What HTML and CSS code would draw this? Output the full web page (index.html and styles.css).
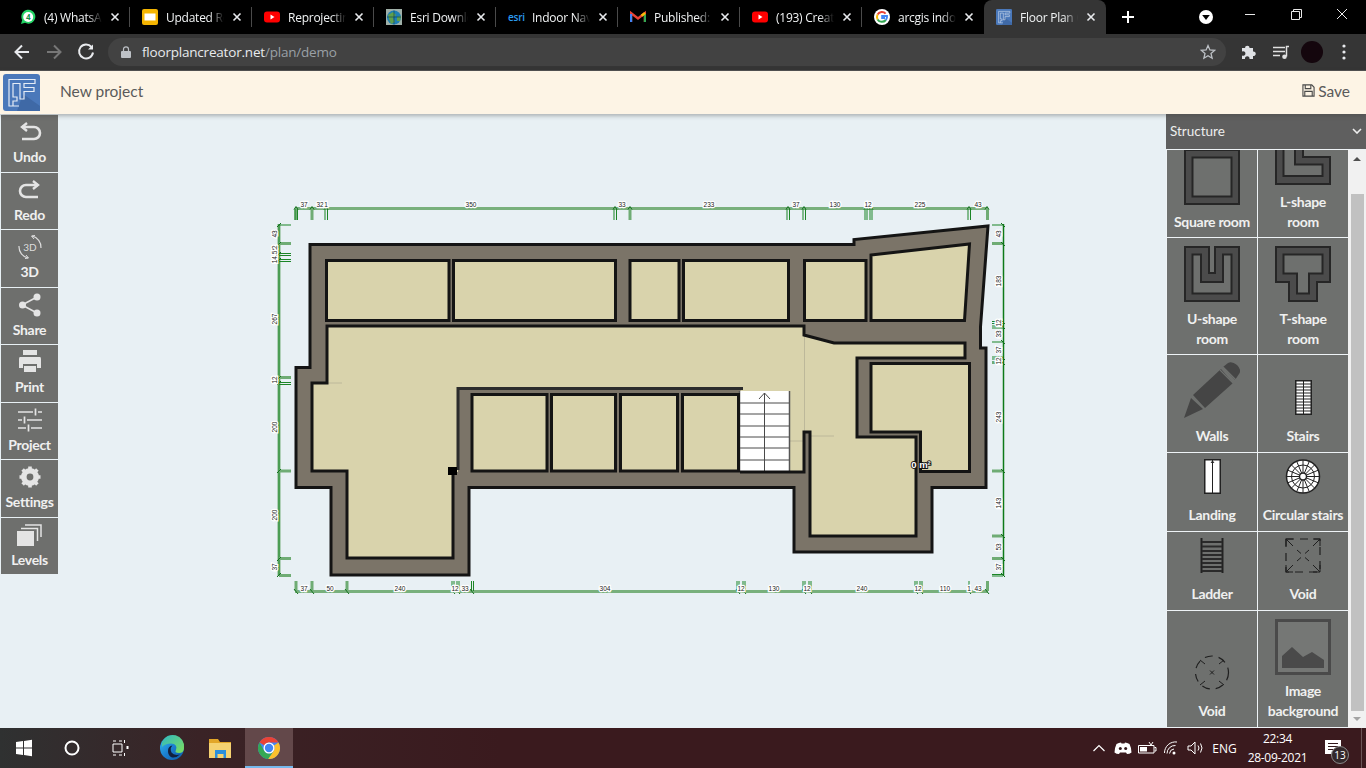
FILE: index.html
```html
<!DOCTYPE html>
<html lang="en">
<head>
<meta charset="utf-8">
<title>Floor Plan Creator</title>
<link rel="stylesheet" href="styles.css">
</head>
<body>
<svg class="defs" width="0" height="0" aria-hidden="true">
  <symbol id="fp-logo" viewBox="0 0 37 37">
    <rect width="37" height="37" rx="3" fill="#4a78ba"/>
    <path d="M20 20 L37 32 V37 H14 Z" fill="#3f69a6"/>
    <path d="M6 27 V5.500 H32 V9.500 H21 V13.500 H31 V17.500 H21 V25 H17 V9.500 H10 V23 H14 V27 H10 V32 H16 M6 27 V32 H10" fill="none" stroke="#e4ecf6" stroke-width="1.200"/>
  </symbol>
  <symbol id="yt" viewBox="0 0 16 16">
    <rect y="2.500" width="16" height="11" rx="3" fill="#f00"/>
    <path d="M6.500 5.500 L10.500 8 L6.500 10.500Z" fill="#fff"/>
  </symbol>
  <symbol id="x" viewBox="0 0 10 10">
    <path d="M1.500 1.500 L8.500 8.500 M8.500 1.500 L1.500 8.500" stroke="#e8eaed" stroke-width="1.600"/>
  </symbol>
</svg>

<header class="tabbar">
  <div class="tabs">
    <div class="tab">
      <svg class="fav" viewBox="0 0 16 16"><path d="M1 15 L2.200 11 A7 7 0 1 1 5 13.800Z" fill="#25d366"/><circle cx="8.200" cy="8" r="5" fill="#fff"/><text x="8.200" y="11" class="fav-four">4</text></svg>
      <span class="tab-title">(4) WhatsApp</span>
      <svg class="tab-x"><use href="#x"/></svg>
    </div>
    <div class="tab">
      <svg class="fav" viewBox="0 0 16 16"><rect width="16" height="16" rx="2" fill="#f4b400"/><rect x="2.500" y="4.500" width="11" height="7" fill="#fff"/></svg>
      <span class="tab-title">Updated Req</span>
      <svg class="tab-x"><use href="#x"/></svg>
    </div>
    <div class="tab">
      <svg class="fav"><use href="#yt"/></svg>
      <span class="tab-title">Reprojecting</span>
      <svg class="tab-x"><use href="#x"/></svg>
    </div>
    <div class="tab">
      <svg class="fav" viewBox="0 0 16 16"><rect width="16" height="16" fill="#9fb0a8"/><circle cx="8" cy="8.500" r="7" fill="#1f7fb5"/><path d="M2 6 L7 3 L10 6 L7 9 L9 13 L5 15 L3 10Z M11 8 L15 7 L14 12 L11 12Z" fill="#5fa04e"/><path d="M1 8 H15 M8 1.500 V15.500" stroke="#0c3a56" stroke-width=".6"/></svg>
      <span class="tab-title">Esri Downlo</span>
      <svg class="tab-x"><use href="#x"/></svg>
    </div>
    <div class="tab">
      <span class="fav fav-esri">esri</span>
      <span class="tab-title">Indoor Navig</span>
      <svg class="tab-x"><use href="#x"/></svg>
    </div>
    <div class="tab">
      <svg class="fav" viewBox="0 0 16 16"><path d="M1 13 V4 L8 9.500 L15 4 V13" fill="none" stroke="#ea4335" stroke-width="2.400"/><path d="M1 13 V5" stroke="#4285f4" stroke-width="2.400"/><path d="M15 13 V5" stroke="#34a853" stroke-width="2.400"/><path d="M11.500 6.800 L15 4" stroke="#fbbc05" stroke-width="2.400"/></svg>
      <span class="tab-title">Published:</span>
      <svg class="tab-x"><use href="#x"/></svg>
    </div>
    <div class="tab">
      <svg class="fav"><use href="#yt"/></svg>
      <span class="tab-title">(193) Creat</span>
      <svg class="tab-x"><use href="#x"/></svg>
    </div>
    <div class="tab tab-last">
      <svg class="fav" viewBox="0 0 16 16"><circle cx="8" cy="8" r="8" fill="#fff"/><path d="M11.600 4.600 A5 5 0 0 0 3.600 5.600" fill="none" stroke="#ea4335" stroke-width="2"/><path d="M3.600 5.600 A5 5 0 0 0 3.600 10.400" fill="none" stroke="#fbbc05" stroke-width="2"/><path d="M3.600 10.400 A5 5 0 0 0 11.800 11" fill="none" stroke="#34a853" stroke-width="2"/><path d="M11.800 11 A5 5 0 0 0 13 7 H8.200 V9 H11" fill="none" stroke="#4285f4" stroke-width="2"/></svg>
      <span class="tab-title">arcgis indoo</span>
      <svg class="tab-x"><use href="#x"/></svg>
    </div>
    <div class="tab tab-active">
      <svg class="fav"><use href="#fp-logo"/></svg>
      <span class="tab-title">Floor Plan C</span>
      <svg class="tab-x"><use href="#x"/></svg>
    </div>
  </div>
  <svg class="new-tab" viewBox="0 0 24 24"><path d="M12 6 V18 M6 12 H18" stroke="#fff" stroke-width="2"/></svg>
  <svg class="profile-drop" viewBox="0 0 16 16"><circle cx="8" cy="8" r="7" fill="#fff"/><path d="M4.200 6 H11.800 L8 11Z" fill="#000"/></svg>
  <div class="win-controls">
    <svg class="win-btn" viewBox="0 0 46 28"><path d="M18 14.500 H28" stroke="#e8e8e8"/></svg>
    <svg class="win-btn" viewBox="0 0 46 28"><path d="M18.500 11.500 H26.500 V19.500 H18.500Z M20.500 11 V9.500 H28.500 V17.500 H27" fill="none" stroke="#e8e8e8"/></svg>
    <svg class="win-btn" viewBox="0 0 46 28"><path d="M18 9 L28 19 M28 9 L18 19" stroke="#e8e8e8"/></svg>
  </div>
</header>

<nav class="toolbar">
  <svg class="nav-btn" viewBox="0 0 32 36"><path d="M23 18 H10 M16 11.500 L9.500 18 L16 24.500" fill="none" stroke="#e8eaed" stroke-width="2"/></svg>
  <svg class="nav-btn" viewBox="0 0 32 36"><path d="M9 18 H22 M16 11.500 L22.500 18 L16 24.500" fill="none" stroke="#777" stroke-width="2"/></svg>
  <svg class="nav-btn" viewBox="0 0 32 36"><path d="M21.500 13 A7 7 0 1 0 23 18.500" fill="none" stroke="#e8eaed" stroke-width="2"/><path d="M23 10.500 V15.500 H18Z" fill="#e8eaed"/></svg>
  <div class="omnibox">
    <svg class="lock" viewBox="0 0 10 12"><path d="M2.500 5 V3.300 A2.500 2.500 0 0 1 7.500 3.300 V5" fill="none" stroke="#bdc1c6" stroke-width="1.200"/><rect y="5" width="10" height="7" rx="1" fill="#bdc1c6"/></svg>
    <span class="url"><span class="url-host">floorplancreator.net</span>/plan/demo</span>
    <svg class="star" viewBox="0 0 16 16"><path d="M8 1.600 L9.900 6 L14.600 6.400 L11 9.500 L12.100 14.200 L8 11.700 L3.900 14.200 L5 9.500 L1.400 6.400 L6.100 6Z" fill="none" stroke="#bdc1c6" stroke-width="1.300"/></svg>
  </div>
  <svg class="tool-btn" viewBox="0 0 32 36"><path d="M10 14 H13 A2.300 2.300 0 1 1 17.600 14 H21 V17.500 A2.300 2.300 0 1 1 21 22 V25 H17.500 A2.300 2.300 0 1 0 13 25 H10 V21.500 A2.300 2.300 0 1 0 10 17.500Z" fill="#dfe1e5"/></svg>
  <svg class="tool-btn" viewBox="0 0 32 36"><path d="M9 13.500 H21 M9 17.500 H21 M9 21.500 H16" stroke="#e0e0e0" stroke-width="1.500"/><path d="M22.500 22.500 V12.500 H25" fill="none" stroke="#e0e0e0" stroke-width="1.500"/><circle cx="20.500" cy="22.800" r="2.300" fill="#e0e0e0"/></svg>
  <div class="avatar-box"><div class="avatar"></div></div>
  <svg class="tool-btn" viewBox="0 0 32 36"><circle cx="16" cy="12" r="1.600" fill="#e8eaed"/><circle cx="16" cy="18" r="1.600" fill="#e8eaed"/><circle cx="16" cy="24" r="1.600" fill="#e8eaed"/></svg>
</nav>

<div class="appbar">
  <svg class="app-logo"><use href="#fp-logo"/></svg>
  <span class="project-name">New project</span>
  <span class="save">
    <svg class="save-icon" viewBox="0 0 14 14"><path d="M1 1 H10.500 L13 3.500 V13 H1Z M3.500 1 V5 H9.500 V1 M3 13 V8 H11 V13" fill="none" stroke="#4a4a4a" stroke-width="1.200"/></svg>
    Save
  </span>
</div>

<main class="workspace">
  <aside class="tools">
    <div class="tool">
      <svg class="tool-ico" viewBox="0 0 30 30"><path d="M12 6 L7 10 L12 14" fill="none" stroke="#e4e4e4" stroke-width="2.400"/><path d="M7 10 H19 A6 6 0 0 1 19 22 H7" fill="none" stroke="#e4e4e4" stroke-width="2.600"/></svg>
      <span class="tool-label">Undo</span>
    </div>
    <div class="tool">
      <svg class="tool-ico" viewBox="0 0 30 30"><path d="M18 6 L23 10 L18 14" fill="none" stroke="#e4e4e4" stroke-width="2.400"/><path d="M23 10 H11 A6 6 0 0 0 11 22 H23" fill="none" stroke="#e4e4e4" stroke-width="2.600"/></svg>
      <span class="tool-label">Redo</span>
    </div>
    <div class="tool">
      <svg class="tool-ico" viewBox="0 0 30 30"><text x="15" y="19" class="ico-3d">3D</text><path d="M17 4 A11.500 11.500 0 0 1 26 16" fill="none" stroke="#ddd" stroke-width="1.200"/><path d="M20 3.500 L16.500 4 L19 7" fill="none" stroke="#ddd"/><path d="M13 26 A11.500 11.500 0 0 1 4 14" fill="none" stroke="#ddd" stroke-width="1.200"/><path d="M10 26.500 L13.500 26 L11 23" fill="none" stroke="#ddd"/></svg>
      <span class="tool-label">3D</span>
    </div>
    <div class="tool">
      <svg class="tool-ico" viewBox="0 0 30 30"><path d="M22 7 L7 15 L22 23" fill="none" stroke="#e4e4e4" stroke-width="1.600"/><circle cx="22" cy="7" r="3.500" fill="#e4e4e4"/><circle cx="7.500" cy="15" r="3.500" fill="#e4e4e4"/><circle cx="22" cy="23" r="3.500" fill="#e4e4e4"/></svg>
      <span class="tool-label">Share</span>
    </div>
    <div class="tool">
      <svg class="tool-ico" viewBox="0 0 30 30"><rect x="8" y="3" width="14" height="5" fill="#e4e4e4"/><path d="M5 10 H25 Q26 10 26 12 V21 H22 V17 H8 V21 H4 V12 Q4 10 5 10Z" fill="#e4e4e4"/><rect x="9" y="19" width="12" height="6" fill="#e4e4e4"/></svg>
      <span class="tool-label">Print</span>
    </div>
    <div class="tool">
      <svg class="tool-ico" viewBox="0 0 30 30"><path d="M3 7 H18 M23 7 H27 M3 15 H7 M12 15 H27 M3 23 H11 M16 23 H27 M20.500 3.500 V10.500 M9.500 11.500 V18.500 M13.500 19.500 V26.500" fill="none" stroke="#e4e4e4" stroke-width="1.700"/></svg>
      <span class="tool-label">Project</span>
    </div>
    <div class="tool">
      <svg class="tool-ico" viewBox="0 0 30 30"><circle cx="15" cy="15" r="6.500" fill="none" stroke="#e4e4e4" stroke-width="5"/><path d="M15 4.500 V25.500 M4.500 15 H25.500 M7.600 7.600 L22.400 22.400 M22.400 7.600 L7.600 22.400" stroke="#e4e4e4" stroke-width="3.600"/><circle cx="15" cy="15" r="3.400" fill="#6e6f6d"/></svg>
      <span class="tool-label">Settings</span>
    </div>
    <div class="tool">
      <svg class="tool-ico" viewBox="0 0 30 30"><rect x="2" y="11" width="17" height="15" fill="#e4e4e4"/><path d="M6 8.500 H22.500 V21" fill="none" stroke="#e4e4e4" stroke-width="1.500"/><path d="M10 5 H26 V17" fill="none" stroke="#e4e4e4" stroke-width="1.500"/></svg>
      <span class="tool-label">Levels</span>
    </div>
  </aside>

  <section class="canvas">
    <svg class="plan" width="750" height="410" viewBox="265 195 750 410">
      <!-- walls -->
      <path class="wall" d="M310 244.500 H854 V239.500 L988 226 L980.500 327 V348 H986 V487.500 H932 V552 H794 V487.500 H469 V575 H331 V487.500 H296 V367.500 H310 Z"/>
      <!-- hall -->
      <path class="floor-fill" d="M327 326 H804 V335 L834 343 H965 V358 H857 V437 H916 V536 H810 V432 H804 V472 H740 V391 H740 L743 388 H458 V472 H453 V558 H347 V471 H312 V383 H327 Z"/>
      <path class="faint" d="M804.500 335 V432 M790 441 H804 M810 436 H834 M314 383 H342"/>
      <rect class="stairs" x="740" y="391" width="49" height="81"/>
      <path class="stair-lines" d="M740 403 H789 M740 414 H789 M740 426 H789 M740 437 H789 M740 448 H789 M740 460 H789 M764.500 393 V472 M759 399 L764.500 393 L770 399"/>
      <path class="stair-edge" d="M739.500 391 V472 M789.500 391 V472"/>
      <path class="line" d="M453 472 V558 H347 V471 H312 V383 H327 V326 H804 V335 L834 343 H965 V358 H857 V437 H916 V536 H810 V432 H804 V472 H740"/>
      <path class="line line-soft" d="M743 388.500 H458 V470"/>
      <rect class="post" x="448" y="467" width="9" height="8"/>
      <!-- rooms -->
      <rect class="room" x="326.500" y="260.500" width="122.500" height="60"/>
      <rect class="room" x="453.500" y="260.500" width="162" height="60"/>
      <rect class="room" x="630" y="260.500" width="49" height="60"/>
      <rect class="room" x="683.500" y="260.500" width="105" height="60"/>
      <rect class="room" x="804.500" y="260.500" width="61.500" height="60"/>
      <path class="room" d="M871 255 L969.500 244 L964.500 320.500 H871 Z"/>
      <rect class="room" x="472" y="394.500" width="75" height="76.500"/>
      <rect class="room" x="551.500" y="394.500" width="64" height="76.500"/>
      <rect class="room" x="620.500" y="394.500" width="57" height="76.500"/>
      <rect class="room" x="682.500" y="394.500" width="56" height="76.500"/>
      <path class="room" d="M871 363.500 H969.500 V471.500 H920.500 V432 H871 Z"/>
      <text class="area" x="921" y="468">0 m²</text>

      <!-- dimensions: top -->
      <path class="dim" d="M295 208.500 H988"/>
      <path class="dim-tick" d="M312 209 V220 M987.500 209 V220 M630 209 V220 M296 209 V220"/>
      <path class="dim-tick-thin" d="M295 209 V220 M297.500 209 V220 M325 209 V220 M327.500 209 V220 M614 209 V220 M616.500 209 V220 M787 209 V220 M789.500 209 V220 M803 209 V220 M805.500 209 V220 M865 209 V220 M867 209 V220 M870 209 V220 M872 209 V220 M968 209 V220 M970.500 209 V220"/>
      <path class="dim-hook" d="M294 209.500 L296 206.500 L298 209.500 M310 209.500 L312 206.500 L314 209.500 M324 209.500 L326 206.500 L328 209.500 M613 209.500 L615 206.500 L617 209.500 M628 209.500 L630 206.500 L632 209.500 M786 209.500 L788 206.500 L790 209.500 M802 209.500 L804 206.500 L806 209.500 M864 209.500 L866 206.500 L868 209.500 M869 209.500 L871 206.500 L873 209.500 M967 209.500 L969 206.500 L971 209.500 M985 209.500 L987 206.500 L989 209.500"/>
      <!-- dimensions: left -->
      <path class="dim" d="M279 224 V576"/>
      <path class="dim-core" d="M279 224 V576"/>
      <path class="dim-tick" d="M279 243.500 H291 M279 377.500 H291 M279 471 H291 M279 558.500 H291 M279 575.500 H291"/>
      <path class="dim-tick-thin" d="M279 225 H291 M279 253.500 H291 M279 255.500 H291 M279 259.500 H291 M279 261.500 H291 M279 382.500 H291 M279 384.500 H291"/>
      <path class="dim-hook" d="M277 227 L281 223 M277 246 L281 242 M277 256 L281 252 M277 262 L281 258 M277 380 L281 376 M277 385 L281 381 M277 473 L281 469 M277 561 L281 557 M277 577 L281 573"/>
      <!-- dimensions: right -->
      <path class="dim-core-strong" d="M1003.500 224 V576"/>
      <path class="dim-tick" d="M992 243.500 H1003 M992 471 H1003 M992 536 H1003 M992 558.500 H1003 M992 362.500 H1003"/>
      <path class="dim-tick-thin" d="M992 225 H1003 M992 321.500 H1003 M992 323.500 H1003 M992 326 H1003 M992 328 H1003 M992 342 H1003 M992 357 H1003 M992 359 H1003 M992 574.500 H1003 M992 576 H1003"/>
      <path class="dim-hook" d="M1001 223 L1005 227 M1001 242 L1005 246 M1001 320 L1005 324 M1001 325 L1005 329 M1001 340 L1005 344 M1001 356 L1005 360 M1001 361 L1005 365 M1001 469 L1005 473 M1001 534 L1005 538 M1001 557 L1005 561 M1001 573 L1005 577"/>
      <!-- dimensions: bottom -->
      <path class="dim" d="M295 591.500 H988"/>
      <path class="dim-tick" d="M312 581 V591 M347 581 V591 M987.500 581 V591 M296 581 V591"/>
      <path class="dim-tick-thin" d="M452 581 V591 M454 581 V591 M457 581 V591 M459 581 V591 M471.500 581 V591 M473.500 581 V591 M737 581 V591 M739 581 V591 M743 581 V591 M745 581 V591 M803 581 V591 M805 581 V591 M809 581 V591 M811 581 V591 M915 581 V591 M917 581 V591 M920 581 V591 M922 581 V591 M969 581 V591"/>
      <path class="dim-hook" d="M294 589 L298 594 M310 589 L314 594 M345 589 L349 594 M451 589 L455 594 M456 589 L460 594 M470 589 L474 594 M736 589 L740 594 M742 589 L746 594 M802 589 L806 594 M808 589 L812 594 M914 589 L918 594 M919 589 L923 594 M967 589 L971 594 M985 589 L989 594"/>

      <!-- dimension labels -->
      <g class="dim-labels">
        <text x="304" y="207">37</text><text x="320" y="207">32</text><text x="326" y="207">1</text><text x="471" y="207">350</text><text x="622" y="207">33</text><text x="709" y="207">233</text><text x="796" y="207">37</text><text x="835" y="207">130</text><text x="868" y="207">12</text><text x="920" y="207">225</text><text x="978" y="207">43</text>
        <text x="304" y="591">37</text><text x="330" y="591">50</text><text x="400" y="591">240</text><text x="455" y="591">12</text><text x="465" y="591">33</text><text x="605" y="591">304</text><text x="741" y="591">12</text><text x="774" y="591">130</text><text x="807" y="591">12</text><text x="862" y="591">240</text><text x="918" y="591">12</text><text x="945" y="591">110</text><text x="969" y="591">1</text><text x="978" y="591">43</text>
        <text transform="translate(277 234) rotate(-90)">43</text><text transform="translate(277 249) rotate(-90)">22</text><text transform="translate(277 257) rotate(-90)">14.5</text><text transform="translate(277 319) rotate(-90)">267</text><text transform="translate(277 380) rotate(-90)">12</text><text transform="translate(277 427) rotate(-90)">200</text><text transform="translate(277 515) rotate(-90)">200</text><text transform="translate(277 567) rotate(-90)">37</text>
        <text transform="translate(1001 234) rotate(-90)">43</text><text transform="translate(1001 281) rotate(-90)">183</text><text transform="translate(1001 323) rotate(-90)">12</text><text transform="translate(1001 334) rotate(-90)">33</text><text transform="translate(1001 350) rotate(-90)">37</text><text transform="translate(1001 361) rotate(-90)">12</text><text transform="translate(1001 417) rotate(-90)">243</text><text transform="translate(1001 503) rotate(-90)">143</text><text transform="translate(1001 547) rotate(-90)">53</text><text transform="translate(1001 567) rotate(-90)">37</text>
      </g>
    </svg>
  </section>

  <aside class="library">
    <div class="lib-head"><span>Structure</span><svg class="lib-chev" viewBox="0 0 10 6"><path d="M1 1 L5 5 L9 1" fill="none" stroke="#eee" stroke-width="1.600"/></svg></div>
    <div class="lib-body">
      <div class="lib-view">
        <div class="lib-grid">
          <div class="cell cell-tall">
            <svg class="ico-lg" viewBox="0 0 56 56"><rect class="r-outer" x="1" y="1" width="54" height="54"/><rect class="r-inner" x="8.500" y="8.500" width="39" height="39"/></svg>
            <span>Square room</span>
          </div>
          <div class="cell cell-tall">
            <svg class="ico-lg" viewBox="0 0 56 56"><path class="r-outer" d="M1 1 H28 V28 H55 V55 H1 Z"/><path class="r-inner" d="M8.500 1 H20 V35.500 H47.500 V47 H8.500 Z"/></svg>
            <span>L-shape<br>room</span>
          </div>
          <div class="cell cell-tall">
            <svg class="ico-lg" viewBox="0 0 56 56"><path class="r-outer" d="M1 1 H25 V27 H31 V1 H55 V55 H1 Z"/><path class="r-inner" d="M8.500 8.500 H17 V36 H39 V8.500 H47.500 V47.500 H8.500 Z"/></svg>
            <span>U-shape<br>room</span>
          </div>
          <div class="cell cell-tall">
            <svg class="ico-lg" viewBox="0 0 56 56"><path class="r-outer" d="M1 1 H55 V36 H42 V55 H14 V36 H1 Z"/><path class="r-inner" d="M8.500 8.500 H47.500 V27.500 H34 V47.500 H22 V27.500 H8.500 Z"/></svg>
            <span>T-shape<br>room</span>
          </div>
          <div class="cell">
            <svg class="ico-lg" viewBox="0 0 56 56"><path class="pencil" d="M0 56 L7 36 L19 47 Z M9 33 L37 7 L49 21 L21 46 Z M39 5 L44 1 Q48 -1 53 3 Q58 8 55 12 L51 18 Z"/><path class="pencil-cut" d="M36 8 L50 22 M39 5 L53 19"/></svg>
            <span>Walls</span>
          </div>
          <div class="cell cell-small">
            <svg class="ico-stairs" viewBox="0 0 17 35"><rect x=".75" y=".75" width="15.500" height="33.500" fill="#fff" stroke="#222" stroke-width="1.500"/><path d="M1 4 H16 M1 7 H16 M1 10 H16 M1 13 H16 M1 16 H16 M1 19 H16 M1 22 H16 M1 25 H16 M1 28 H16 M1 31 H16" stroke="#222" stroke-width="1.200"/><path d="M8.500 1 V34" stroke="#222"/></svg>
            <span>Stairs</span>
          </div>
          <div class="cell cell-small">
            <svg class="ico-stairs" viewBox="0 0 17 35"><rect x=".75" y=".75" width="15.500" height="33.500" fill="#fff" stroke="#222" stroke-width="1.500"/><path d="M8.500 1 V34 M7 4 L8.500 2 L10 4" fill="none" stroke="#222"/></svg>
            <span>Landing</span>
          </div>
          <div class="cell cell-small">
            <svg class="ico-round" viewBox="0 0 36 35"><circle cx="18" cy="17.500" r="16.500" fill="#fff" stroke="#222" stroke-width="1.500"/><circle cx="18" cy="17.500" r="11.500" fill="none" stroke="#222"/><path d="M18 1 V34 M1.500 17.500 H34.500 M6.300 5.800 L29.700 29.200 M29.700 5.800 L6.300 29.200 M11.700 2.300 L24.300 32.700 M24.300 2.300 L11.700 32.700 M2.800 11.200 L33.200 23.800 M33.200 11.200 L2.800 23.800" stroke="#222"/><circle cx="18" cy="17.500" r="3.500" fill="#fff" stroke="#222" stroke-width="1.500"/></svg>
            <span>Circular stairs</span>
          </div>
          <div class="cell cell-small">
            <svg class="ico-ladder" viewBox="0 0 24 35"><path d="M1.500 0 V35 M22.500 0 V35" stroke="#222" stroke-width="2"/><path d="M2 4 H22 M2 8.500 H22 M2 13 H22 M2 17 H22 M2 21 H22 M2 25 H22 M2 29 H22 M2 33 H22" stroke="#2a2a2a" stroke-width="2"/></svg>
            <span>Ladder</span>
          </div>
          <div class="cell cell-small">
            <svg class="ico-round" viewBox="0 0 36 35"><path class="void-dash" d="M1 1 H35 V34 H1 Z"/><path class="void-arrow" d="M1 8 V1 H8 M1 1 L8 8 M28 1 H35 V8 M35 1 L28 8 M1 27 V34 H8 M1 34 L8 27 M35 27 V34 H28 M35 34 L28 27 M12 12 L16 15.500 M24 12 L20 15.500 M12 23 L16 19.500 M24 23 L20 19.500"/></svg>
            <span>Void</span>
          </div>
          <div class="cell cell-small">
            <svg class="ico-round" viewBox="0 0 36 35"><circle class="void-dash" cx="18" cy="17.500" r="16.500"/><path class="void-arrow" d="M16 15.500 L20 19.500 M20 15.500 L16 19.500 M6 5 L11 9 M30 5 L25 9 M6 30 L11 26 M30 30 L25 26"/></svg>
            <span>Void</span>
          </div>
          <div class="cell cell-image">
            <svg class="ico-lg" viewBox="0 0 56 56"><rect x="1.500" y="1.500" width="53" height="53" fill="#757775" stroke="#4a4a4a" stroke-width="3"/><path d="M7 49 V37 L17 28 L28 38 L37 33 L49 41 V49 Z" class="img-hill"/></svg>
            <span>Image<br>background</span>
          </div>
        </div>
      </div>
      <div class="scrollbar">
        <div class="sb-up"></div>
        <div class="sb-thumb"></div>
        <div class="sb-down"></div>
      </div>
    </div>
  </aside>
</main>

<footer class="taskbar">
  <svg class="tb-icon" viewBox="0 0 48 40"><path d="M16 14 L23 13 V19.500 H16 Z M24 12.900 L32 11.800 V19.500 H24 Z M16 20.500 H23 V27 L16 26 Z M24 20.500 H32 V28.200 L24 27.100 Z" fill="#fff"/></svg>
  <svg class="tb-icon" viewBox="0 0 48 40"><circle cx="24" cy="20" r="6.500" fill="none" stroke="#fff" stroke-width="2"/></svg>
  <svg class="tb-icon" viewBox="0 0 48 40"><path d="M17 16 H26 V24 H17 Z M17 13 H20 M23 13 H26 M17 27 H20 M23 27 H26 M28.500 12 V15 M28.500 25 V28" fill="none" stroke="#fff" stroke-width="1"/><rect x="30.500" y="18" width="2" height="3" fill="#fff"/></svg>
  <svg class="tb-icon tb-first-app" viewBox="0 0 48 40"><defs><linearGradient id="edge-g" x1="0" y1="0" x2="1" y2="1"><stop offset="0" stop-color="#35c1f1"/><stop offset=".5" stop-color="#1b7fd0"/><stop offset="1" stop-color="#0c59a4"/></linearGradient><linearGradient id="edge-h" x1="0" y1="0" x2="1" y2="1"><stop offset="0" stop-color="#2fb8c4"/><stop offset="1" stop-color="#7fe05a"/></linearGradient></defs><circle cx="24" cy="20" r="12" fill="url(#edge-g)"/><path d="M14 14 A11.500 11.500 0 0 1 36 20 Q36 25 31 25 Q26 25 28 22 Q30 16 23 15.500 Q17 15.500 14 19 Z" fill="url(#edge-h)"/><path d="M20 23 Q20 18 24.500 17.500 Q21.500 20 23.500 24.500 Q26 28 32 26.500 Q27 31 23 29 Q20 27 20 23Z" fill="#13203c"/></svg>
  <svg class="tb-icon" viewBox="0 0 48 40"><path d="M13 11 H22 L24 14 H35 V30 H13 Z" fill="#e2a628"/><path d="M13 15 H35 V30 H13 Z" fill="#f5d271"/><path d="M19 22 H30 V30 H27.500 V26 H21.500 V30 H19 Z" fill="#2a8fdc"/></svg>
  <div class="tb-active">
    <svg class="tb-icon" viewBox="0 0 48 40"><circle cx="24" cy="20" r="11" fill="#4285f4"/><path d="M24 9 A11 11 0 0 1 33.500 14.500 H24 A5.500 5.500 0 0 0 19.200 17.300 L14.500 14.500 A11 11 0 0 1 24 9Z" fill="#ea4335"/><path d="M33.500 14.500 A11 11 0 0 1 23 31 L28.800 22.800 A5.500 5.500 0 0 0 29 17.500 Z" fill="#fbc02d"/><path d="M14.500 14.500 L19.200 22.800 A5.500 5.500 0 0 0 28.800 22.800 L23 31 A11 11 0 0 1 14.500 14.500Z" fill="#34a853"/><circle cx="24" cy="20" r="5.500" fill="#fff"/><circle cx="24" cy="20" r="4.200" fill="#4285f4"/></svg>
  </div>
  <div class="tray">
    <svg class="tray-ico" viewBox="0 0 24 24"><path d="M6.500 15 L12 9.500 L17.500 15" fill="none" stroke="#fff" stroke-width="1.200"/></svg>
    <svg class="tray-ico" viewBox="0 0 24 24"><path d="M5.500 8 Q8 6.500 10 6.500 L10.500 7.500 H13.500 L14 6.500 Q16 6.500 18.500 8 Q20.500 12 20.500 16.500 Q18.500 18 16 18 L15 16.500 H9 L8 18 Q5.500 18 3.500 16.500 Q3.500 12 5.500 8Z" fill="#fff"/><circle cx="9.300" cy="12.500" r="1.500" fill="#33191c"/><circle cx="14.700" cy="12.500" r="1.500" fill="#33191c"/></svg>
    <svg class="tray-ico" viewBox="0 0 24 24"><path d="M3.500 9.500 H19 V17 H3.500 Z" fill="none" stroke="#fff"/><path d="M5 11 H12 V15.500 H5Z" fill="#fff"/><path d="M19.500 11.500 H21 V15 H19.500 M14 6 L16 9 M18 6 L16 9" fill="none" stroke="#fff"/></svg>
    <svg class="tray-ico" viewBox="0 0 24 24"><path d="M5.500 17 A11 11 0 0 1 18 6 M8 17.500 A8 8 0 0 1 16.500 9.500 M10.500 17.500 A5 5 0 0 1 15 13" fill="none" stroke="#fff"/><circle cx="15" cy="17" r="1.500" fill="#fff"/></svg>
    <svg class="tray-ico" viewBox="0 0 24 24"><path d="M5 10 H8 L12 6 V18 L8 14 H5 Z M15 9.500 Q17 12 15 14.500 M17.500 7.500 Q20.500 12 17.500 16.500" fill="none" stroke="#fff"/></svg>
    <span class="tray-lang">ENG</span>
    <div class="clock"><span>22:34</span><span>28-09-2021</span></div>
    <div class="notif">
      <svg class="notif-ico" viewBox="0 0 16 14"><path d="M0 0 H16 V14 H0 Z" fill="#fff"/><path d="M3 3.500 H13 M3 6.500 H13 M3 9.500 H10" stroke="#33191c"/></svg>
      <span class="notif-badge">13</span>
    </div>
    <div class="show-desktop"></div>
  </div>
</footer>
</body>
</html>
```
FILE: styles.css
```css
* { box-sizing: border-box; }
html, body { margin: 0; padding: 0; width: 1366px; height: 768px; overflow: hidden; }
body { font-family: "Open Sans", "Noto Sans", sans-serif; background: #e8f0f4; display: flex; flex-direction: column; }
.defs { position: absolute; }

/* Browser tab strip */
.tabbar { height: 34px; background: #000; display: flex; align-items: center; flex: none; }
.tabs { display: flex; margin-left: 8px; height: 34px; }
.tab { width: 122px; height: 34px; display: flex; align-items: center; padding-left: 12px; border-right: 1px solid transparent; position: relative; }
.tab::after { content: ""; position: absolute; right: -1px; top: 7px; width: 1px; height: 20px; background: #4a4a4a; }
.tab-last::after, .tab-active::after { display: none; }
.tab-active { background: #353535; border-radius: 8px 8px 0 0; }
.fav { width: 16px; height: 16px; flex: none; }
.fav-esri { font-size: 10px; line-height: 16px; color: #2b9bf0; font-weight: 600; letter-spacing: -.2px; }
.fav-four { font-size: 8px; font-weight: 700; fill: #128c4a; text-anchor: middle; }
.tab-title { width: 58px; margin-left: 8px; font-size: 12px; letter-spacing: -.25px; color: #f1f3f4; white-space: nowrap; overflow: hidden; -webkit-mask-image: linear-gradient(90deg, #000 75%, transparent 100%); mask-image: linear-gradient(90deg, #000 75%, transparent 100%); }
.tab-x { width: 10px; height: 10px; margin-left: 8px; flex: none; }
.new-tab { width: 24px; height: 24px; margin-left: 10px; flex: none; }
.profile-drop { width: 16px; height: 16px; margin-left: 58px; flex: none; }
.win-controls { display: flex; margin-left: 13px; height: 34px; }
.win-btn { width: 46px; height: 28px; }

/* Browser toolbar */
.toolbar { height: 36px; background: #353535; display: flex; align-items: center; padding-left: 6px; flex: none; }
.nav-btn { width: 32px; height: 36px; flex: none; }
.omnibox { width: 1118px; height: 28px; margin-left: 6px; background: #424242; border-radius: 14px; display: flex; align-items: center; padding: 0 10px 0 13px; flex: none; }
.lock { width: 10px; height: 12px; flex: none; }
.url { margin-left: 11px; flex: 1; font-size: 13.500px; color: #9aa0a6; letter-spacing: -.2px; }
.url-host { color: #e8eaed; }
.star { width: 16px; height: 16px; flex: none; }
.tool-btn { width: 32px; height: 36px; flex: none; }
.omnibox + .tool-btn { margin-left: 6px; }
.avatar-box { width: 32px; height: 36px; display: flex; align-items: center; justify-content: center; flex: none; }
.avatar { width: 22px; height: 22px; border-radius: 50%; background: #14060d; }

/* App bar */
.appbar { height: 44px; background: #fdf4e5; border-top: 1px solid #4f4f4f; display: flex; align-items: center; padding: 0 16px 0 3px; box-shadow: 0 2px 4px rgba(60, 60, 60, .35); position: relative; z-index: 2; flex: none; }
.app-logo { width: 37px; height: 37px; flex: none; }
.project-name { margin: 0 0 4px 20px; font-family: "Lato", sans-serif; font-size: 15.500px; color: #5a5a5a; flex: 1; }
.save { display: flex; align-items: center; gap: 3px; margin-bottom: 4px; font-family: "Lato", sans-serif; font-size: 15.500px; color: #5a5a5a; }
.save-icon { width: 13px; height: 13px; }

/* Workspace */
.workspace { height: 614px; display: flex; background: #e8f0f4; flex: none; }
.tools { width: 59px; padding: 1px 0 0 1px; display: grid; grid-template-rows: repeat(4, 57px 56px); row-gap: 1px; align-content: start; flex: none; }
.tool { width: 57px; background: #6e6f6d; display: flex; flex-direction: column; align-items: center; padding-top: 2px; }
.tool-ico { width: 30px; height: 30px; flex: none; }
.ico-3d { font-family: "Lato", sans-serif; font-size: 10px; fill: #ddd; text-anchor: middle; }
.tool-label { font-family: "Lato", sans-serif; font-weight: 700; font-size: 14px; line-height: 20px; color: #f0f0f0; letter-spacing: -.3px; }

/* Plan */
.canvas { flex: 1; padding: 81px 0 0 206px; }
.plan { display: block; overflow: visible; }
.wall { fill: #7b7468; stroke: #141414; stroke-width: 3; }
.floor-fill { fill: #d9d3ac; }
.line { fill: none; stroke: #141414; stroke-width: 3; }
.line-soft { stroke: #2c2c2c; stroke-width: 3; }
.faint { fill: none; stroke: #bdb89a; stroke-width: 1; }
.room { fill: #d9d3ac; stroke: #141414; stroke-width: 3; }
.post { fill: #000; }
.stairs { fill: #fff; }
.stair-lines { fill: none; stroke: #4a4a4a; stroke-width: 1; }
.stair-edge { stroke: #555; stroke-width: 1.500; }
.area { font-family: "Liberation Sans", sans-serif; font-size: 9.500px; font-weight: 700; fill: #fff; stroke: #111; stroke-width: 1.800px; paint-order: stroke; text-anchor: middle; }
.dim { fill: none; stroke: #78b07c; stroke-width: 3; }
.dim-core { fill: none; stroke: #1f8a2c; stroke-width: 1; }
.dim-core-strong { fill: none; stroke: #0d7a18; stroke-width: 1.500; }
.dim-tick { fill: none; stroke: #6fac74; stroke-width: 3; }
.dim-tick-thin { fill: none; stroke: #1b8526; stroke-width: 1; }
.dim-hook { fill: none; stroke: #12701d; stroke-width: 1; }
.dim-labels text { font-family: "Liberation Sans", sans-serif; font-size: 6.500px; fill: #222; stroke: #fff; stroke-width: 2.500px; paint-order: stroke; text-anchor: middle; }

/* Library */
.library { width: 200px; display: flex; flex-direction: column; flex: none; }
.lib-head { height: 35px; background: #5f5f5f; color: #eee; font-family: "Lato", sans-serif; font-size: 13.500px; display: flex; align-items: center; justify-content: space-between; padding: 0 4px 2px 4px; flex: none; }
.lib-chev { width: 10px; height: 6px; }
.lib-body { height: 579px; padding-top: 1px; display: flex; background: #eef3f6; flex: none; }
.lib-view { width: 182px; height: 578px; overflow: hidden; padding-left: 1px; }
.lib-grid { margin-top: -30px; display: grid; grid-template-columns: 90px 90px; grid-template-rows: 117px 116px 97px 78px 78px 116px; gap: 1px; }
.cell { background: #6e706e; display: flex; flex-direction: column; align-items: center; justify-content: flex-end; padding-bottom: 6px; text-align: center; }
.cell span { font-family: "Lato", sans-serif; font-weight: 700; font-size: 14px; line-height: 20px; color: #f0f0f0; letter-spacing: -.3px; white-space: nowrap; }
.ico-lg { width: 56px; height: 56px; margin-bottom: 8px; flex: none; }
.cell-tall { padding-bottom: 5px; }
.cell-tall .ico-lg { margin-bottom: 7px; }
.cell-small svg { margin-bottom: 11px; }
.cell-image .ico-lg { margin-bottom: 6px; }
.ico-stairs { width: 17px; height: 35px; flex: none; }
.ico-ladder { width: 24px; height: 35px; flex: none; }
.ico-round { width: 36px; height: 35px; flex: none; }
.r-outer { fill: #4b4b4b; stroke: #262626; stroke-width: 2; }
.r-inner { fill: #6e706e; stroke: #262626; stroke-width: 2; }
.pencil { fill: #454545; }
.pencil-cut { fill: none; stroke: #6e706e; stroke-width: 1.300; }
.void-dash { fill: none; stroke: #1f1f1f; stroke-width: 1.200; stroke-dasharray: 8 6; }
.void-arrow { fill: none; stroke: #1f1f1f; stroke-width: 1; }
.img-hill { fill: #4a4a4a; }

.scrollbar { width: 18px; height: 578px; background: #f1f1f1; display: flex; flex-direction: column; }
.sb-up { width: 0; height: 0; margin: 7px 0 0 5px; border-left: 4px solid transparent; border-right: 4px solid transparent; border-bottom: 4px solid #505050; }
.sb-thumb { width: 13px; height: 517px; margin: 33px 0 0 3px; background: #c1c1c1; }
.sb-down { width: 0; height: 0; margin: 6px 0 0 5px; border-left: 4px solid transparent; border-right: 4px solid transparent; border-top: 4px solid #a3a3a3; }

/* Taskbar */
.taskbar { height: 40px; display: flex; align-items: stretch; background: linear-gradient(90deg, #2f3131 0, #3a2326 200px, #3a1a1e 500px, #3a1a1e 100%); flex: none; color: #fff; }
.tb-icon { width: 48px; height: 40px; flex: none; }
.tb-first-app { margin-left: 4px; }
.tb-active { width: 48px; height: 40px; margin-left: 1px; background: #63484a; border-bottom: 2px solid #76b9ed; }
.tray { margin-left: auto; display: flex; align-items: center; }
.tray-ico { width: 24px; height: 24px; flex: none; }
.tray-lang { width: 29px; margin-left: 3px; font-size: 12px; text-align: center; }
.clock { width: 77px; display: flex; flex-direction: column; align-items: center; font-size: 12px; line-height: 19px; letter-spacing: -.3px; }
.notif { width: 34px; height: 40px; display: flex; align-items: flex-start; justify-content: center; padding-top: 12px; position: relative; }
.notif-ico { width: 16px; height: 14px; }
.notif-badge { position: absolute; left: 15px; top: 18px; width: 18px; height: 18px; border-radius: 50%; background: #33282a; border: 1px solid #888; font-size: 10px; line-height: 16px; text-align: center; }
.show-desktop { width: 5px; height: 40px; margin-left: 11px; border-left: 1px solid #6b5557; }
```
